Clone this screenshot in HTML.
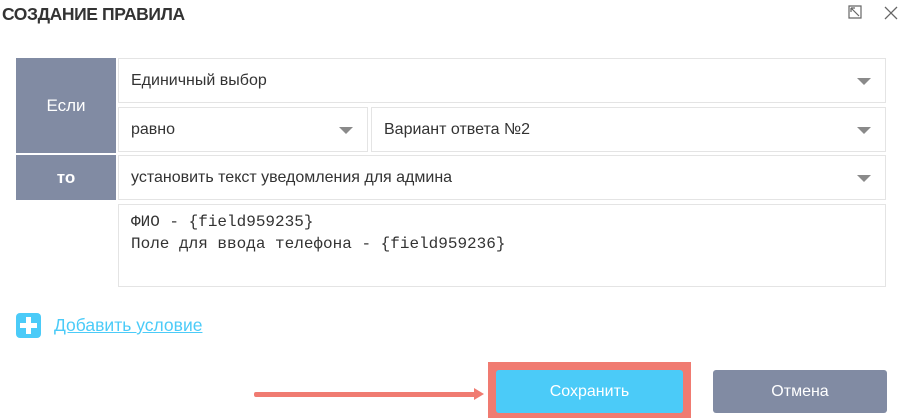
<!DOCTYPE html><html><head><style>
body{margin:0;width:904px;height:419px;background:#fff;font-family:"Liberation Sans",sans-serif;position:relative;overflow:hidden}
.a{position:absolute;box-sizing:border-box}
.lab{background:#818ba3;color:#fff;font-size:17px;display:flex;align-items:center;justify-content:center}
.f{border:1px solid #e4e4e4;background:#fff;font-size:16px;color:#333;padding-left:12px;display:flex;align-items:center}
.tri{position:absolute;right:14px;top:50%;margin-top:-3px;border-left:7px solid transparent;border-right:7px solid transparent;border-top:7px solid #8a8a8a}
</style></head><body>
<div class="a" style="left:2px;top:4px;font-size:17.5px;font-weight:bold;color:#333;letter-spacing:-0.4px">СОЗДАНИЕ ПРАВИЛА</div>
<svg class="a" style="left:847px;top:4px" width="16" height="16"><path d="M2 2h12v12H2z" fill="none" stroke="#666" stroke-width="1.2"/><path d="M4 4l8 8M4 4v4M4 4h4" stroke="#666" fill="none" stroke-width="1.2"/></svg>
<svg class="a" style="left:883px;top:5px" width="16" height="16"><path d="M2 2L14 14M14 2L2 14" stroke="#666" stroke-width="1.3"/></svg>
<div class="a lab" style="left:16px;top:58px;width:100px;height:95px">Если</div>
<div class="a lab" style="left:16px;top:155px;width:100px;height:45px;font-weight:bold">то</div>
<div class="a f" style="left:118px;top:58px;width:768px;height:45px">Единичный выбор<span class="tri"></span></div>
<div class="a f" style="left:118px;top:107px;width:250px;height:45px">равно<span class="tri"></span></div>
<div class="a f" style="left:371px;top:107px;width:515px;height:45px">Вариант ответа №2<span class="tri"></span></div>
<div class="a f" style="left:118px;top:155px;width:768px;height:45px">установить текст уведомления для админа<span class="tri"></span></div>
<div class="a" style="left:118px;top:204px;width:768px;height:83px;border:1px solid #e4e4e4;font-family:'Liberation Mono',monospace;font-size:16px;color:#333;padding:6px 12px;line-height:22px;white-space:pre">ФИО - {field959235}
Поле для ввода телефона - {field959236}</div>
<div class="a" style="left:16px;top:313px;width:25px;height:25px;background:#4bcbf8;border-radius:4px"></div>
<div class="a" style="left:26px;top:317px;width:5px;height:17px;background:#fff"></div>
<div class="a" style="left:20px;top:323px;width:17px;height:5px;background:#fff"></div>
<div class="a" style="left:54px;top:315px;font-size:17.5px;color:#4bcbf8;text-decoration:underline">Добавить условие</div>
<div class="a" style="left:254px;top:392px;width:222px;height:5px;background:#f07b71;border-radius:2px"></div>
<div class="a" style="left:474px;top:388px;border-left:10px solid #f07b71;border-top:6px solid transparent;border-bottom:6px solid transparent"></div>
<div class="a" style="left:488px;top:362px;width:203px;height:56px;background:#f07b71"></div>
<div class="a" style="left:496px;top:370px;width:187px;height:43px;background:#4bcbf8;border-radius:3px;color:#fff;font-size:16px;display:flex;align-items:center;justify-content:center">Сохранить</div>
<div class="a" style="left:713px;top:370px;width:174px;height:43px;background:#818ba3;border-radius:3px;color:#fff;font-size:16px;display:flex;align-items:center;justify-content:center">Отмена</div>
</body></html>
